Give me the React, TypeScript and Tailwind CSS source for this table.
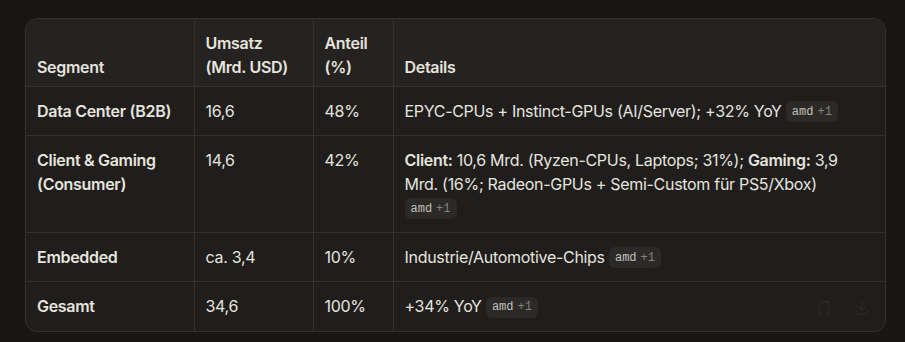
import React from "react";

type Row = {
  segment: React.ReactNode;
  umsatz: string;
  anteil: string;
  details: React.ReactNode;
};

function Source() {
  return (
    <span className="inline-flex items-center gap-1 align-middle h-[21px] px-[6px] rounded-md bg-[#2b2a28] text-[12px] tracking-normal leading-none font-['Liberation_Mono',monospace] relative -top-[1px]">
      <span className="text-[#c2c0b8]">amd</span>
      <span className="text-[#85837d]">+1</span>
    </span>
  );
}

const rows: Row[] = [
  {
    segment: "Data Center (B2B)",
    umsatz: "16,6",
    anteil: "48%",
    details: (
      <>
        EPYC-CPUs + Instinct-GPUs (AI/Server); +32% YoY <Source />
      </>
    ),
  },
  {
    segment: (
      <>
        Client &amp; Gaming
        <br />
        (Consumer)
      </>
    ),
    umsatz: "14,6",
    anteil: "42%",
    details: (
      <>
        <span className="font-semibold">Client:</span> 10,6 Mrd. (Ryzen-CPUs, Laptops; 31%);{" "}
        <span className="font-semibold">Gaming:</span> 3,9 Mrd. (16%; Radeon-GPUs + Semi-Custom für PS5/Xbox)
        <br />
        <Source />
      </>
    ),
  },
  {
    segment: "Embedded",
    umsatz: "ca. 3,4",
    anteil: "10%",
    details: (
      <>
        Industrie/Automotive-Chips <Source />
      </>
    ),
  },
  {
    segment: "Gesamt",
    umsatz: "34,6",
    anteil: "100%",
    details: (
      <>
        +34% YoY <Source />
      </>
    ),
  },
];

export default function App() {
  return (
    <div className="w-[905px] h-[342px] bg-[#181716] pt-[18px] pl-[25px] font-['Inter',sans-serif] text-[16px] leading-6 tracking-[-0.3px] text-[#e6e4dd]">
      <div className="relative w-[861px] rounded-xl border border-[#33322f] bg-[#1f1e1d] overflow-hidden">
        <table className="w-full border-collapse table-fixed">
          <colgroup>
            <col className="w-[168px]" />
            <col className="w-[119px]" />
            <col className="w-[80px]" />
            <col />
          </colgroup>
          <thead>
            <tr className="bg-[#242321] border-b border-[#33322f]">
              <th className="text-left align-bottom font-semibold pl-[11px] pr-3 pt-3 pb-[7px] border-r border-[#33322f]">
                Segment
              </th>
              <th className="text-left align-bottom font-semibold pl-[11px] pr-2 pt-3 pb-[7px] border-r border-[#33322f]">
                Umsatz
                <br />
                (Mrd. USD)
              </th>
              <th className="text-left align-bottom font-semibold pl-[11px] pr-2 pt-3 pb-[7px] border-r border-[#33322f]">
                Anteil
                <br />
                (%)
              </th>
              <th className="text-left align-bottom font-semibold pl-[11px] pr-3 pt-3 pb-[7px]">Details</th>
            </tr>
          </thead>
          <tbody>
            {rows.map((r, i) => (
              <tr key={i} className={i < rows.length - 1 ? "border-b border-[#33322f]" : ""}>
                <td className="align-top font-semibold pl-[11px] pr-2 py-3 border-r border-[#33322f]">{r.segment}</td>
                <td className="align-top pl-[11px] pr-2 py-3 border-r border-[#33322f]">{r.umsatz}</td>
                <td className="align-top pl-[11px] pr-2 py-3 border-r border-[#33322f]">{r.anteil}</td>
                <td className="align-top pl-[11px] pr-3 py-3">{r.details}</td>
              </tr>
            ))}
          </tbody>
        </table>
        <div className="absolute right-[14px] bottom-[14px] flex items-center gap-[20px] text-[#2c2b29]">
          <svg width="18" height="18" viewBox="0 0 24 24" fill="none" stroke="currentColor" strokeWidth="1.6" strokeLinecap="round" strokeLinejoin="round">
            <rect x="5" y="5" width="14" height="15" rx="3" />
            <path d="M9 3h7a3 3 0 0 1 3 3" />
          </svg>
          <svg width="18" height="18" viewBox="0 0 24 24" fill="none" stroke="currentColor" strokeWidth="1.6" strokeLinecap="round" strokeLinejoin="round">
            <path d="M12 3v12" />
            <path d="M7 10l5 5 5-5" />
            <path d="M4 15v4a1 1 0 0 0 1 1h14a1 1 0 0 0 1-1v-4" />
          </svg>
        </div>
      </div>
    </div>
  );
}
